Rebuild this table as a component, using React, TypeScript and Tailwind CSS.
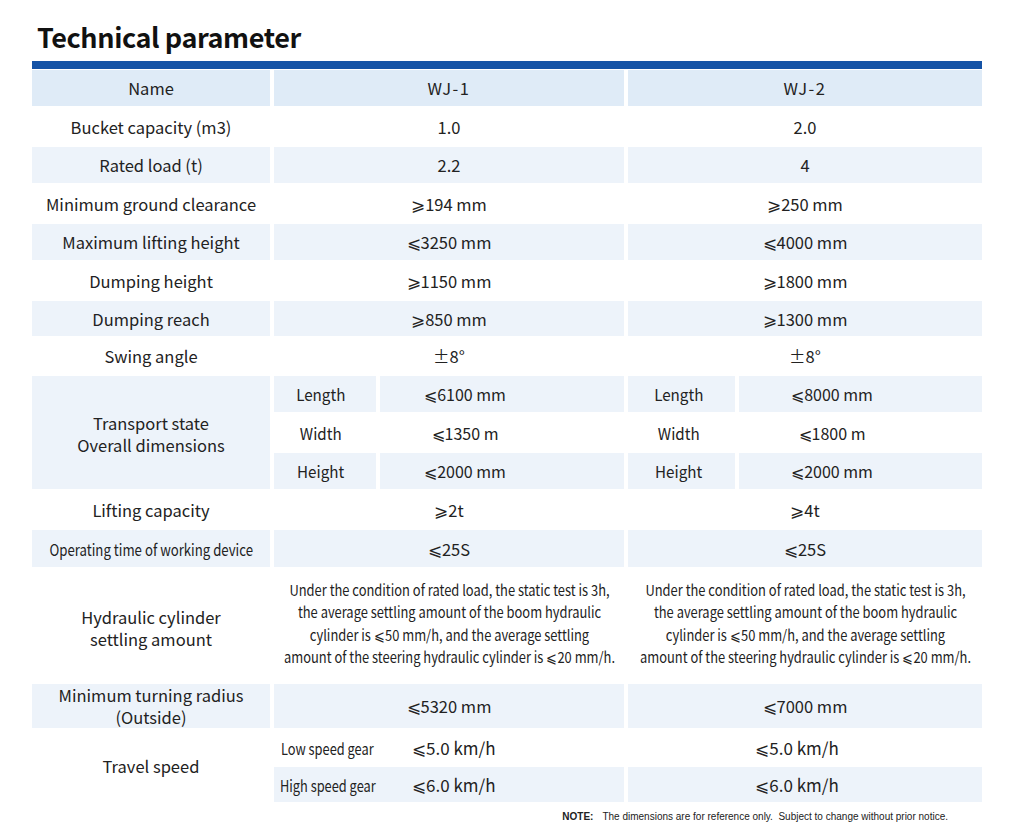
import React from 'react'

const stripe = 'bg-[#edf3fa]'
const cell = 'flex items-center justify-center text-center'

interface SimpleRow {
  name: string
  a: string
  b: string
  striped?: boolean
}

const topRows: SimpleRow[] = [
  { name: 'Bucket capacity (m3)', a: '1.0', b: '2.0' },
  { name: 'Rated load (t)', a: '2.2', b: '4', striped: true },
  { name: 'Minimum ground clearance', a: '⩾194 mm', b: '⩾250 mm' },
  { name: 'Maximum lifting height', a: '⩽3250 mm', b: '⩽4000 mm', striped: true },
  { name: 'Dumping height', a: '⩾1150 mm', b: '⩾1800 mm' },
  { name: 'Dumping reach', a: '⩾850 mm', b: '⩾1300 mm', striped: true },
  { name: 'Swing angle', a: '±8°', b: '±8°' },
]

const dims = [
  { label: 'Length', a: '⩽6100 mm', b: '⩽8000 mm', striped: true },
  { label: 'Width', a: '⩽1350 m', b: '⩽1800 m' },
  { label: 'Height', a: '⩽2000 mm', b: '⩽2000 mm', striped: true },
]

const settling = [
  'Under the condition of rated load, the static test is 3h,',
  'the average settling amount of the boom hydraulic',
  'cylinder is ⩽50 mm/h, and the average settling',
  'amount of the steering hydraulic cylinder is ⩽20 mm/h.',
]

function Narrow({ children }: { children: React.ReactNode }) {
  return <span className="inline-block scale-x-[0.92] whitespace-nowrap">{children}</span>
}

function Settling() {
  return (
    <div className="inline-block scale-x-[0.86] whitespace-nowrap text-[15px] leading-[22.5px]">
      {settling.map(line => (
        <div key={line}>{line}</div>
      ))}
    </div>
  )
}

export default function App() {
  return (
    <div className="w-[1024px] h-[831px] bg-white text-[#222] font-['Noto_Sans_CJK_SC','Noto_Sans',sans-serif] overflow-hidden">
      <h1 className="pl-[37px] pt-[19px] h-[61px] text-[27px] leading-[36px] font-bold text-[#111] tracking-[-0.4px]">
        Technical parameter
      </h1>

      <div className="ml-[32px] w-[950px] h-[8px] bg-[#1553a6]" />

      <div className="ml-[32px] mt-[1px] w-[950px] grid grid-cols-[238px_102px_244px_107px_243px] grid-rows-[36px_37px_36px_37px_36px_37px_35px_36px_36px_37px_36px_37px_37px_113px_44px_35px_35px] gap-x-[4px] gap-y-[2px] text-[16.5px] leading-[22px]">
        {/* header */}
        <div className={`${cell} bg-[#dfebf7]`}>Name</div>
        <div className={`${cell} col-span-2 bg-[#dfebf7] tracking-[1.5px]`}>WJ-1</div>
        <div className={`${cell} col-span-2 bg-[#dfebf7] tracking-[1.5px]`}>WJ-2</div>

        {topRows.map(row => (
          <React.Fragment key={row.name}>
            <div className={`${cell} ${row.striped ? stripe : ''}`}>{row.name}</div>
            <div className={`${cell} col-span-2 ${row.striped ? stripe : ''}`}>{row.a}</div>
            <div className={`${cell} col-span-2 ${row.striped ? stripe : ''}`}>{row.b}</div>
          </React.Fragment>
        ))}

        {/* transport dimensions */}
        <div className={`${cell} row-span-3 ${stripe} flex-col pt-[2px]`}>
          <span>Transport state</span>
          <span>Overall dimensions</span>
        </div>
        {dims.map(d => (
          <React.Fragment key={d.label}>
            <div className={`${cell} pr-[8px] ${d.striped ? stripe : ''}`}>
              <Narrow>{d.label}</Narrow>
            </div>
            <div className={`${cell} pr-[74px] text-[16px] ${d.striped ? stripe : ''}`}>
              <span className="whitespace-nowrap">{d.a}</span>
            </div>
            <div className={`${cell} pr-[6px] ${d.striped ? stripe : ''}`}>
              <Narrow>{d.label}</Narrow>
            </div>
            <div className={`${cell} pr-[57px] text-[16px] ${d.striped ? stripe : ''}`}>
              <span className="whitespace-nowrap">{d.b}</span>
            </div>
          </React.Fragment>
        ))}

        <div className={cell}>Lifting capacity</div>
        <div className={`${cell} col-span-2`}>⩾2t</div>
        <div className={`${cell} col-span-2`}>⩾4t</div>

        <div className={`${cell} ${stripe}`}>
          <span className="inline-block scale-x-[0.8] whitespace-nowrap">Operating time of working device</span>
        </div>
        <div className={`${cell} col-span-2 ${stripe}`}>⩽25S</div>
        <div className={`${cell} col-span-2 ${stripe}`}>⩽25S</div>

        <div className={`${cell} flex-col pt-[4px]`}>
          <span>Hydraulic cylinder</span>
          <span>settling amount</span>
        </div>
        <div className={`${cell} col-span-2 pb-[4px]`}>
          <Settling />
        </div>
        <div className={`${cell} col-span-2 pb-[4px]`}>
          <Settling />
        </div>

        <div className={`${cell} ${stripe} flex-col`}>
          <span>Minimum turning radius</span>
          <span>(Outside)</span>
        </div>
        <div className={`${cell} col-span-2 ${stripe}`}>⩽5320 mm</div>
        <div className={`${cell} col-span-2 ${stripe}`}>⩽7000 mm</div>

        {/* travel speed */}
        <div className={`${cell} row-span-2`}>Travel speed</div>
        <div className="col-span-2 flex items-center">
          <span className="w-[138px] pl-[7px] text-[16px]">
            <span className="inline-block origin-left scale-x-[0.8] whitespace-nowrap">Low speed gear</span>
          </span>
          <span className="text-[17px]">⩽5.0 km/h</span>
        </div>
        <div className={`${cell} col-span-2 pr-[16px] text-[17px]`}>⩽5.0 km/h</div>
        <div className={`col-span-2 flex items-center ${stripe}`}>
          <span className="w-[138px] pl-[6px] text-[16px]">
            <span className="inline-block origin-left scale-x-[0.8] whitespace-nowrap">High speed gear</span>
          </span>
          <span className="text-[17px]">⩽6.0 km/h</span>
        </div>
        <div className={`${cell} col-span-2 pr-[16px] text-[17px] ${stripe}`}>⩽6.0 km/h</div>
      </div>

      <div className="mt-[9px] flex justify-end pr-[76px] font-['Liberation_Sans',Arial,sans-serif] text-[10px] leading-[12px] text-[#222]">
        <span className="font-bold mr-[9px]">NOTE:</span>
        <span>The dimensions are for reference only.&nbsp; Subject to change without prior notice.</span>
      </div>
    </div>
  )
}
